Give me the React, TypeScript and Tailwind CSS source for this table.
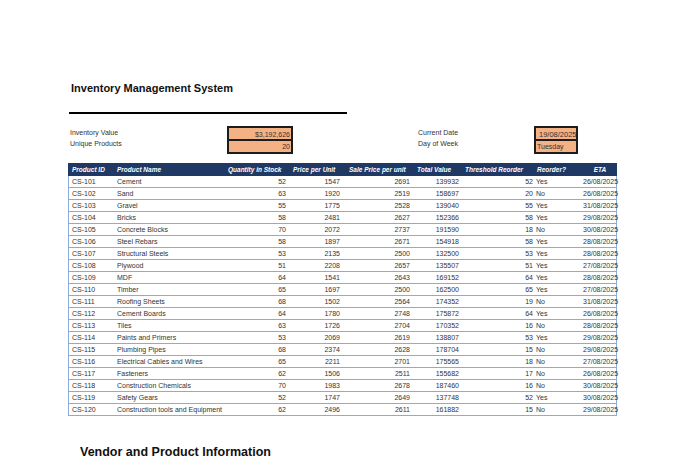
const rows: [string, string, number, number, number, number, number, string, string][] = [
  ['CS-101', 'Cement', 52, 1547, 2691, 139932, 52, 'Yes', '26/08/2025'],
  ['CS-102', 'Sand', 63, 1920, 2519, 158697, 20, 'No', '26/08/2025'],
  ['CS-103', 'Gravel', 55, 1775, 2528, 139040, 55, 'Yes', '31/08/2025'],
  ['CS-104', 'Bricks', 58, 2481, 2627, 152366, 58, 'Yes', '29/08/2025'],
  ['CS-105', 'Concrete Blocks', 70, 2072, 2737, 191590, 18, 'No', '30/08/2025'],
  ['CS-106', 'Steel Rebars', 58, 1897, 2671, 154918, 58, 'Yes', '28/08/2025'],
  ['CS-107', 'Structural Steels', 53, 2135, 2500, 132500, 53, 'Yes', '28/08/2025'],
  ['CS-108', 'Plywood', 51, 2208, 2657, 135507, 51, 'Yes', '27/08/2025'],
  ['CS-109', 'MDF', 64, 1541, 2643, 169152, 64, 'Yes', '28/08/2025'],
  ['CS-110', 'Timber', 65, 1697, 2500, 162500, 65, 'Yes', '27/08/2025'],
  ['CS-111', 'Roofing Sheets', 68, 1502, 2564, 174352, 19, 'No', '31/08/2025'],
  ['CS-112', 'Cement Boards', 64, 1780, 2748, 175872, 64, 'Yes', '26/08/2025'],
  ['CS-113', 'Tiles', 63, 1726, 2704, 170352, 16, 'No', '28/08/2025'],
  ['CS-114', 'Paints and Primers', 53, 2069, 2619, 138807, 53, 'Yes', '29/08/2025'],
  ['CS-115', 'Plumbing Pipes', 68, 2374, 2628, 178704, 15, 'No', '29/08/2025'],
  ['CS-116', 'Electrical Cables and Wires', 65, 2211, 2701, 175565, 18, 'No', '27/08/2025'],
  ['CS-117', 'Fasteners', 62, 1506, 2511, 155682, 17, 'No', '26/08/2025'],
  ['CS-118', 'Construction Chemicals', 70, 1983, 2678, 187460, 16, 'No', '30/08/2025'],
  ['CS-119', 'Safety Gears', 52, 1747, 2649, 137748, 52, 'Yes', '30/08/2025'],
  ['CS-120', 'Construction tools and Equipment', 62, 2496, 2611, 161882, 15, 'No', '29/08/2025'],
]

export default function App() {
  return (
    <div className="w-[680px] h-[459px] bg-white overflow-hidden font-['Liberation_Sans',Arial,sans-serif] text-[#333]">
      <h1 className="pt-[82px] pl-[71px] text-[11px] leading-[12px] font-bold text-[#111]">
        Inventory Management System
      </h1>
      <div className="ml-[69px] mt-[18px] w-[278px] h-[2px] bg-black" />

      {/* summary */}
      <div className="flex mt-[12px] pl-[70px] text-[7px]">
        <div className="w-[157px] shrink-0 pt-[1px] leading-[11px]">
          <div>Inventory Value</div>
          <div>Unique Products</div>
        </div>
        <div className="w-[66px] shrink-0 border-2 border-[#1c1c1c] bg-[#f4b183] text-right leading-[11px]">
          <div className="h-[13px] pt-[1px] pr-[1px] border-b-2 border-[#1c1c1c]">$3,192,626</div>
          <div className="h-[11px] pr-[1px]">20</div>
        </div>
        <div className="w-[125px] shrink-0" />
        <div className="w-[116px] shrink-0 pt-[1px] leading-[11px]">
          <div>Current Date</div>
          <div>Day of Week</div>
        </div>
        <div className="w-[44px] shrink-0 border-2 border-[#1c1c1c] bg-[#f4b183] leading-[11px] overflow-hidden">
          <div className="h-[13px] pt-[1px] pl-[3px] border-b-2 border-[#1c1c1c] whitespace-nowrap text-[7.5px]">19/08/2025</div>
          <div className="h-[11px] pl-[1px]">Tuesday</div>
        </div>
      </div>

      {/* table */}
      <div className="ml-[68px] mt-[9px] w-[549px] text-[7px]">
        <div className="flex h-[13px] items-center bg-[#1f3864] text-white font-bold italic text-[6.5px]">
          <div className="w-[46px] pl-[4px]">Product ID</div>
          <div className="w-[111px] pl-[3px]">Product Name</div>
          <div className="w-[65px] pl-[3px]">Quantity in Stock</div>
          <div className="w-[56px] pl-[3px]">Price per Unit</div>
          <div className="w-[68px] pl-[3px]">Sale Price per unit</div>
          <div className="w-[48px] pl-[3px]">Total Value</div>
          <div className="w-[72px] pl-[3px]">Threshold Reorder</div>
          <div className="w-[49px] pl-[3px]">Reorder?</div>
          <div className="w-[34px] text-center">ETA</div>
        </div>
        <div className="border-x border-[#8eaadb]">
          {rows.map((r) => (
            <div key={r[0]} className="flex h-[12px] items-center border-b border-[#8eaadb] leading-[11px]">
              <div className="w-[45px] pl-[3px]">{r[0]}</div>
              <div className="w-[111px] pl-[3px] whitespace-nowrap">{r[1]}</div>
              <div className="w-[65px] pr-[4px] text-right">{r[2]}</div>
              <div className="w-[56px] pr-[6px] text-right">{r[3]}</div>
              <div className="w-[68px] pr-[4px] text-right">{r[4]}</div>
              <div className="w-[48px] pr-[3px] text-right">{r[5]}</div>
              <div className="w-[72px] pr-[1px] text-right">{r[6]}</div>
              <div className="w-[49px] pl-[2px]">{r[7]}</div>
              <div className="w-[33px] pr-[2px] text-right whitespace-nowrap">{r[8]}</div>
            </div>
          ))}
        </div>
      </div>

      <h2 className="mt-[29px] pl-[80px] text-[12.5px] leading-[14px] font-bold text-[#111]">
        Vendor and Product Information
      </h2>
    </div>
  )
}
